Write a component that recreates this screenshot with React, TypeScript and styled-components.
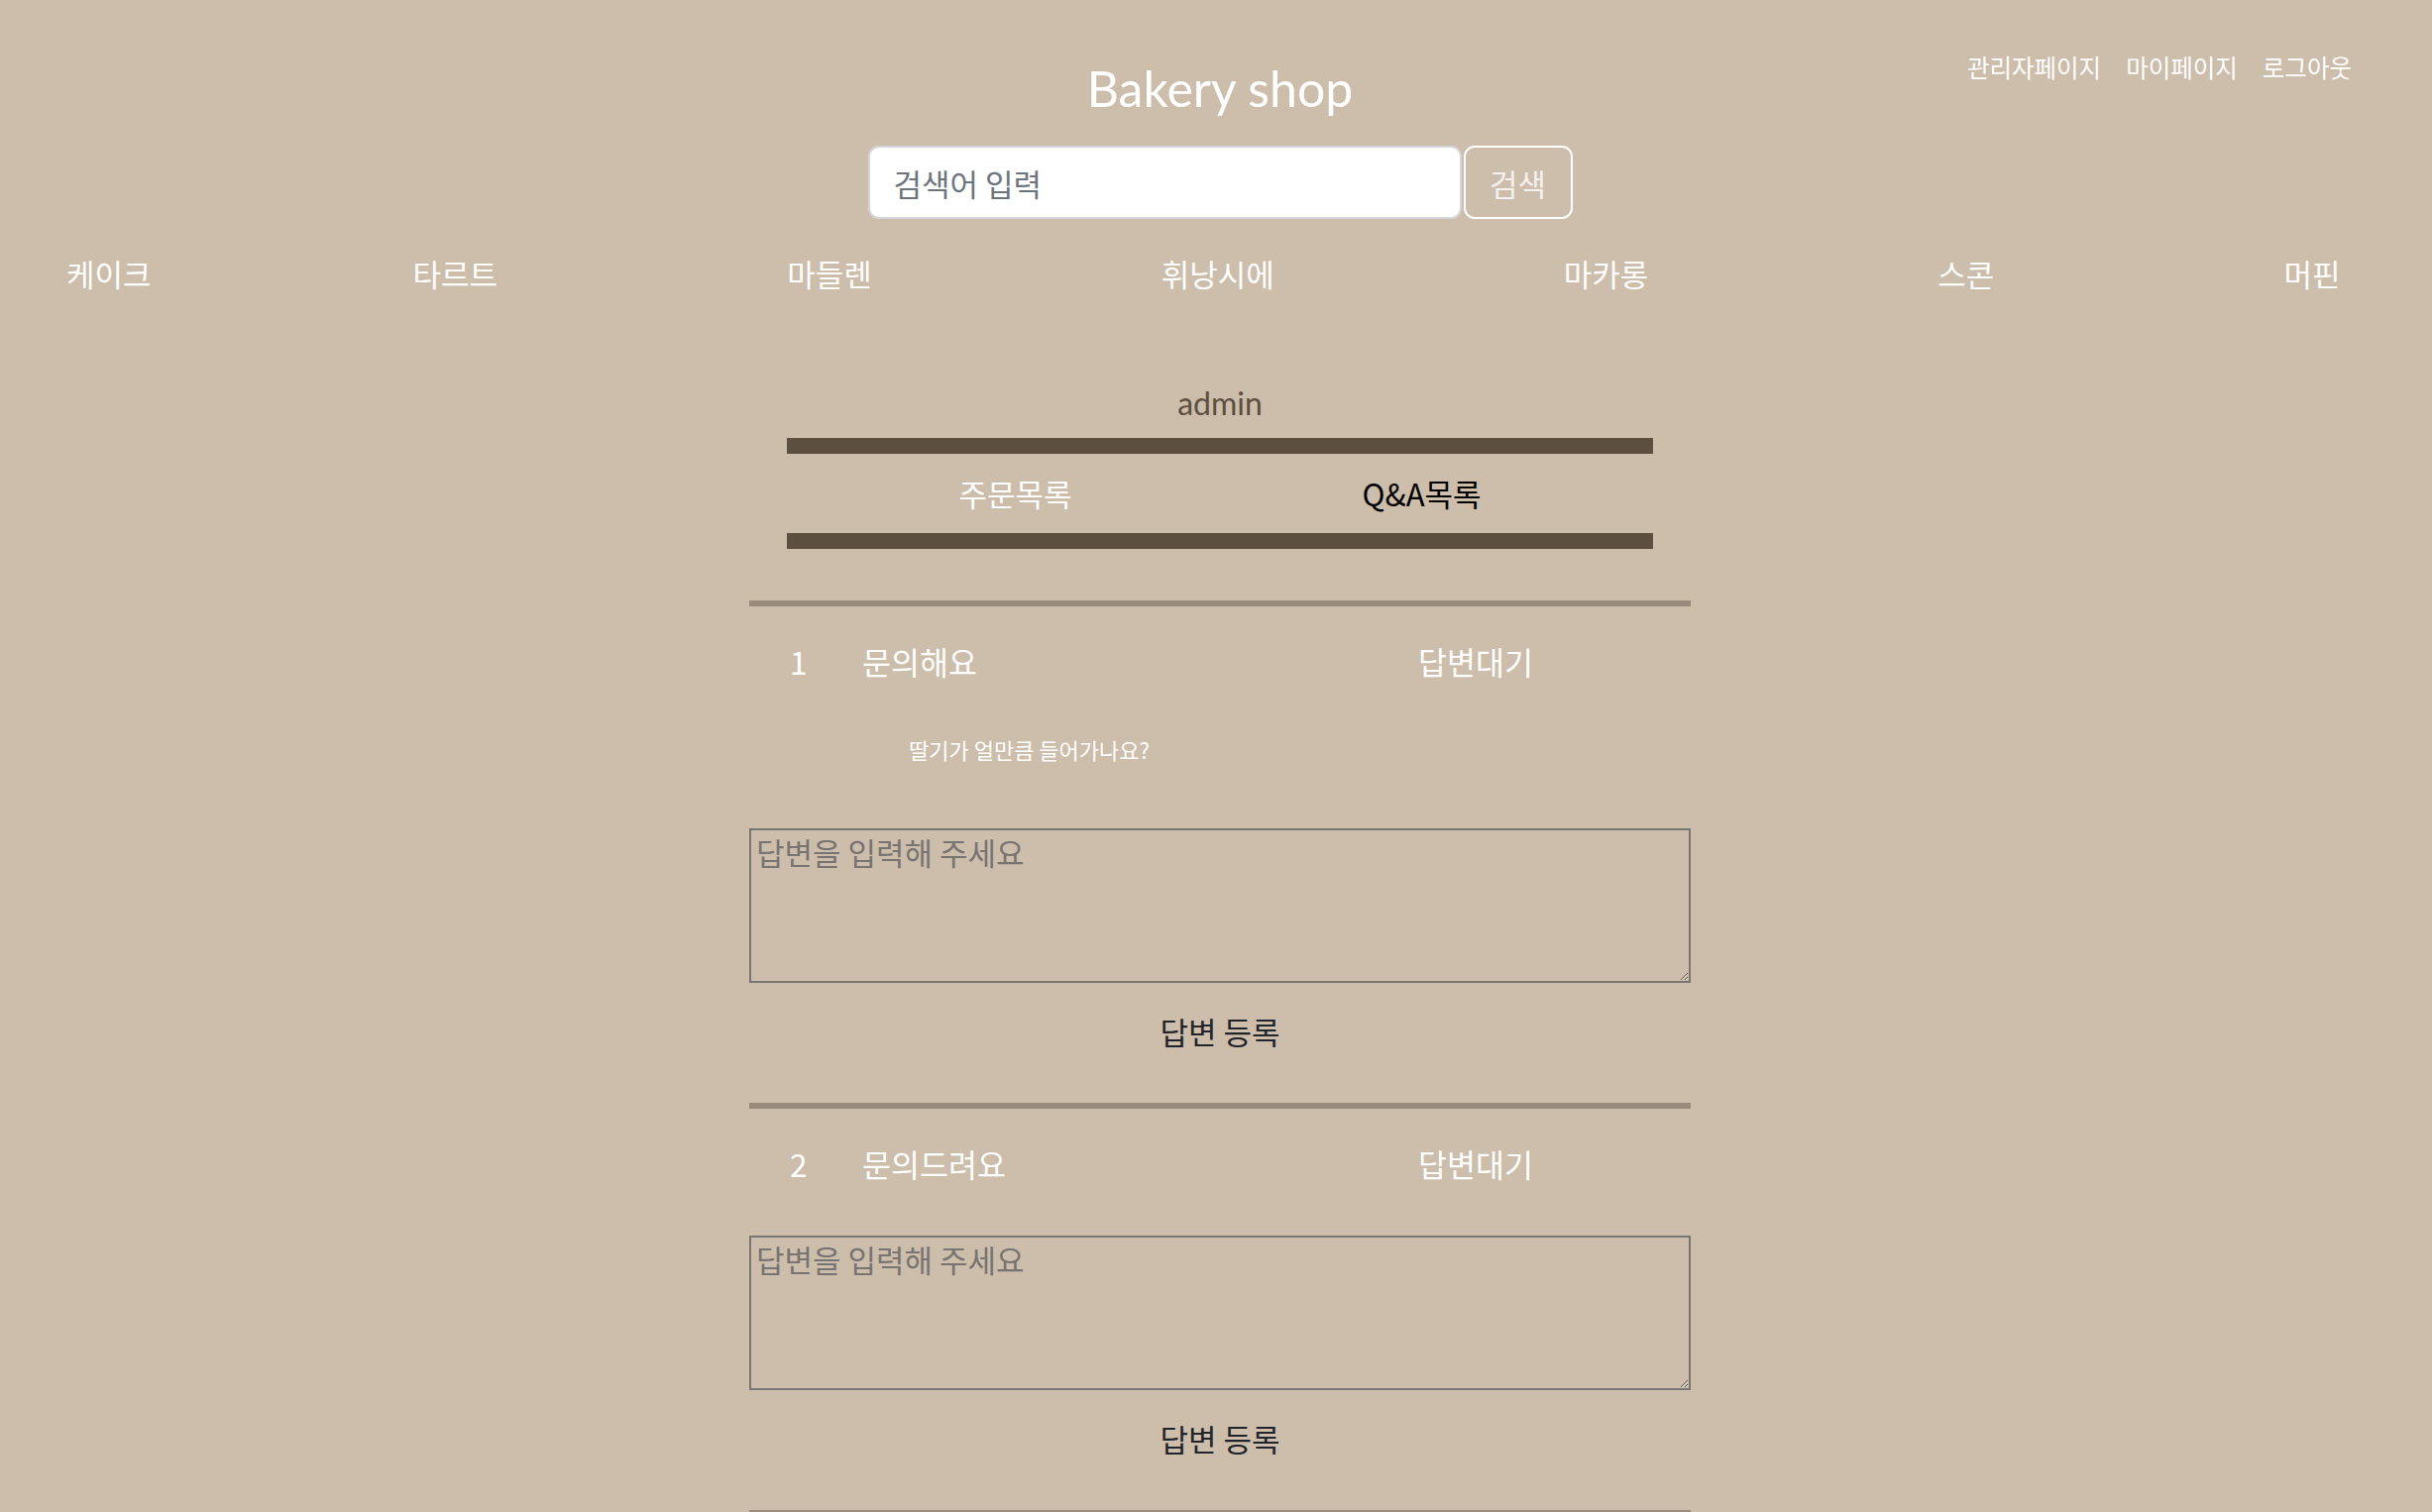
import React from "react";
import styled, { createGlobalStyle } from "styled-components";

const GlobalStyle = createGlobalStyle`
  html, body {
    margin: 0;
    padding: 0;
    background: #cdbdab;
    overflow: hidden;
  }
  body {
    font-family: "Noto Sans CJK KR", "Noto Sans", sans-serif;
    color: #ffffff;
  }
  * { box-sizing: border-box; }
`;

const Page = styled.div`
  width: 2454px;
  min-height: 1526px;
  padding-left: 8px;
  background: #cdbdab;
  display: flex;
  flex-direction: column;
  align-items: center;
`;

const Header = styled.header`
  width: 100%;
  display: grid;
  grid-template-columns: 1fr auto 1fr;
  align-items: start;
  padding-top: 50px;
`;

const Title = styled.h1`
  grid-column: 2;
  margin: 9px 0 0;
  font-family: Lato, "Noto Sans", sans-serif;
  font-weight: 400;
  font-size: 50px;
  line-height: 60px;
  color: #ffffff;
  text-align: center;
`;

const TopLinks = styled.nav`
  grid-column: 3;
  justify-self: end;
  display: flex;
  gap: 25px;
  padding-right: 81px;
`;

const TopLink = styled.a`
  font-size: 24.5px;
  line-height: 36px;
  color: #ffffff;
  text-decoration: none;
`;

const SearchBar = styled.form`
  margin-top: 28px;
  display: flex;
  gap: 2px;
`;

const SearchInput = styled.input`
  width: 599px;
  height: 74px;
  border: 2px solid #d3d7dc;
  border-radius: 11px;
  background: #ffffff;
  padding: 0 24px;
  font-family: "Noto Sans CJK KR", sans-serif;
  font-size: 31px;
  color: #212529;
  outline: none;
  &::placeholder {
    color: #6c757d;
  }
`;

const SearchButton = styled.button`
  width: 110px;
  height: 74px;
  border: 2px solid #ffffff;
  border-radius: 11px;
  background: transparent;
  font-family: "Noto Sans CJK KR", sans-serif;
  font-size: 31px;
  color: #f4f1ee;
  padding: 0;
`;

const CategoryNav = styled.nav`
  width: 100%;
  margin-top: 35px;
  padding-left: 59px;
  display: flex;
  justify-content: flex-start;
  gap: 292px;
`;

const CategoryLink = styled.a`
  font-size: 31px;
  line-height: 40px;
  color: #ffffff;
  text-decoration: none;
  &:first-child {
    margin-right: -28px;
  }
`;

const UserName = styled.div`
  margin-top: 92px;
  font-family: Lato, "Noto Sans", sans-serif;
  font-size: 32px;
  line-height: 38px;
  color: #5c4f3f;
`;

const Bar = styled.div`
  width: 874px;
  height: 16px;
  background: #5c4f3f;
`;

const TopBar = styled(Bar)`
  margin-top: 16px;
`;

const Tabs = styled.div`
  width: 874px;
  height: 80px;
  display: flex;
  justify-content: center;
  align-items: center;
  gap: 293px;
`;

const Tab = styled.a<{ $active?: boolean }>`
  font-size: 31px;
  line-height: 40px;
  color: ${(p) => (p.$active ? "#000000" : "#ffffff")};
  text-decoration: none;
`;

const QnaList = styled.section`
  margin-top: 52px;
  width: 950px;
  border-bottom: 6px solid #9a8c7c;
`;

const QnaItem = styled.article`
  border-top: 6px solid #9a8c7c;
  padding: 35px 0 52px;
  display: flex;
  flex-direction: column;
`;

const QnaRow = styled.div`
  display: grid;
  grid-template-columns: 73px 561px auto;
  padding-left: 41px;
  font-size: 31.5px;
  line-height: 40px;
  color: #ffffff;
`;

const QnaContent = styled.p`
  margin: 0;
  padding: 54px 0 12px 161px;
  font-size: 22px;
  line-height: 30px;
  color: #ffffff;
`;

const AnswerInput = styled.textarea`
  margin-top: 53px;
  width: 950px;
  height: 156px;
  border: 2px solid #787572;
  background: transparent;
  padding: 0 5px;
  font-family: "Noto Sans CJK KR", sans-serif;
  font-size: 31px;
  line-height: 44px;
  color: #222;
  outline: none;
  display: block;
  &::placeholder {
    color: #777472;
  }
`;

const AnswerButton = styled.button`
  margin-top: 29px;
  align-self: center;
  border: none;
  background: transparent;
  padding: 0;
  font-family: "Noto Sans CJK KR", sans-serif;
  font-size: 31px;
  line-height: 40px;
  color: #212529;
`;

const categories = ["케이크", "타르트", "마들렌", "휘낭시에", "마카롱", "스콘", "머핀"];

const questions = [
  { id: 1, title: "문의해요", status: "답변대기", content: "딸기가 얼만큼 들어가나요?" },
  { id: 2, title: "문의드려요", status: "답변대기", content: "" },
];

export default function App() {
  return (
    <>
      <GlobalStyle />
      <Page>
        <Header>
          <Title>Bakery shop</Title>
          <TopLinks>
            <TopLink>관리자페이지</TopLink>
            <TopLink>마이페이지</TopLink>
            <TopLink>로그아웃</TopLink>
          </TopLinks>
        </Header>
        <SearchBar onSubmit={(e) => e.preventDefault()}>
          <SearchInput placeholder="검색어 입력" />
          <SearchButton type="submit">검색</SearchButton>
        </SearchBar>
        <CategoryNav>
          {categories.map((c) => (
            <CategoryLink key={c}>{c}</CategoryLink>
          ))}
        </CategoryNav>
        <UserName>admin</UserName>
        <TopBar />
        <Tabs>
          <Tab>주문목록</Tab>
          <Tab $active>Q&amp;A목록</Tab>
        </Tabs>
        <Bar />
        <QnaList>
          {questions.map((q) => (
            <QnaItem key={q.id}>
              <QnaRow>
                <span>{q.id}</span>
                <span>{q.title}</span>
                <span>{q.status}</span>
              </QnaRow>
              {q.content && <QnaContent>{q.content}</QnaContent>}
              <AnswerInput placeholder="답변을 입력해 주세요" />
              <AnswerButton type="button">답변 등록</AnswerButton>
            </QnaItem>
          ))}
        </QnaList>
      </Page>
    </>
  );
}
